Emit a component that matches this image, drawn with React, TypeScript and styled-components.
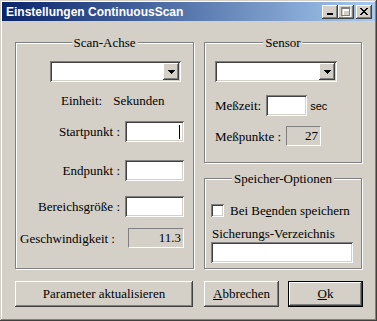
import React from 'react';
import styled, { createGlobalStyle, css } from 'styled-components';

const GlobalStyle = createGlobalStyle`
  html, body {
    margin: 0;
    padding: 0;
    background: #d4d0c8;
  }
  body {
    font-family: "Liberation Serif", "Times New Roman", serif;
    font-size: 13px;
    color: #000;
  }
`;

const raised = css`
  box-shadow: inset -1px -1px #404040, inset 1px 1px #fff, inset -2px -2px #808080,
    inset 2px 2px #d4d0c8;
`;

const sunken = css`
  box-shadow: inset 1px 1px #808080, inset -1px -1px #fff, inset 2px 2px #404040,
    inset -2px -2px #d4d0c8;
`;

const Window = styled.div`
  box-sizing: border-box;
  width: 377px;
  height: 321px;
  padding: 2px;
  background: #d4d0c8;
  box-shadow: inset -1px -1px #404040, inset 1px 1px #d4d0c8, inset -2px -2px #808080,
    inset 2px 2px #fff;
  display: flex;
  flex-direction: column;
`;

const TitleBar = styled.div`
  height: 19px;
  display: flex;
  align-items: center;
  padding: 0 3px 0 4px;
  background: linear-gradient(to right, #0a246a, #a6caf0);
`;

const Title = styled.div`
  flex: 1;
  color: #fff;
  font-family: "Liberation Sans", Arial, sans-serif;
  font-weight: bold;
  font-size: 12px;
`;

const Caps = styled.div`
  display: flex;
`;

const CapBtn = styled.div<{ $gap?: boolean }>`
  width: 16px;
  height: 14px;
  margin-left: ${(p) => (p.$gap ? '2px' : '0')};
  background: #d4d0c8;
  display: flex;
  align-items: center;
  justify-content: center;
  ${raised}
`;

const Body = styled.div`
  flex: 1;
  display: flex;
  flex-direction: column;
  padding: 21px 0 0 13px;
`;

const Panels = styled.div`
  display: flex;
  gap: 10px;
`;

const RightCol = styled.div`
  display: flex;
  flex-direction: column;
  gap: 15px;
`;

const Group = styled.div<{ $w: number; $h: number }>`
  position: relative;
  box-sizing: border-box;
  width: ${(p) => p.$w}px;
  height: ${(p) => p.$h}px;
  border: 1px solid #808080;
  box-shadow: inset 1px 1px #fff, 1px 1px #fff;
  display: flex;
  flex-direction: column;
`;

const Legend = styled.span`
  position: absolute;
  top: -8px;
  left: 50%;
  transform: translateX(-50%);
  padding: 0 2px;
  background: #d4d0c8;
  line-height: 15px;
  white-space: nowrap;
`;

const Row = styled.div<{ $top: number; $left?: number; $right?: number; $end?: boolean }>`
  display: flex;
  align-items: center;
  margin-top: ${(p) => p.$top}px;
  padding-left: ${(p) => p.$left ?? 0}px;
  padding-right: ${(p) => p.$right ?? 0}px;
  justify-content: ${(p) => (p.$end ? 'flex-end' : 'flex-start')};
  white-space: nowrap;
`;

const Label = styled.span<{ $gap?: number }>`
  margin-right: ${(p) => p.$gap ?? 0}px;
  line-height: 15px;
`;

const Field = styled.div<{ $w: number; $h?: number }>`
  position: relative;
  box-sizing: border-box;
  width: ${(p) => p.$w}px;
  height: ${(p) => p.$h ?? 21}px;
  background: #fff;
  ${sunken}
`;

const Caret = styled.span`
  position: absolute;
  right: 4px;
  top: 4px;
  width: 1px;
  height: 14px;
  background: #000;
`;

const Readout = styled.div<{ $w: number; $h?: number }>`
  box-sizing: border-box;
  width: ${(p) => p.$w}px;
  height: ${(p) => p.$h ?? 20}px;
  border: 1px solid;
  border-color: #808080 #fff #fff #808080;
  text-align: right;
  padding-right: 2px;
  line-height: 18px;
`;

const Combo = styled.div<{ $w: number }>`
  box-sizing: border-box;
  width: ${(p) => p.$w}px;
  height: 21px;
  background: #fff;
  display: flex;
  justify-content: flex-end;
  padding: 2px;
  ${sunken}
`;

const DropBtn = styled.div`
  width: 16px;
  height: 17px;
  background: #d4d0c8;
  display: flex;
  align-items: center;
  justify-content: center;
  ${raised}
`;

const Unit = styled.span`
  margin-left: 3px;
  font-family: "Liberation Sans", Arial, sans-serif;
  font-size: 11px;
`;

const Check = styled.div`
  box-sizing: border-box;
  width: 13px;
  height: 13px;
  background: #fff;
  margin-right: 6px;
  ${sunken}
`;

const ButtonRow = styled.div`
  display: flex;
  margin-top: 12px;
`;

const Button = styled.div<{ $w: number; $gap?: number; $default?: boolean }>`
  box-sizing: border-box;
  width: ${(p) => p.$w}px;
  height: 26px;
  margin-left: ${(p) => p.$gap ?? 0}px;
  display: flex;
  align-items: center;
  justify-content: center;
  background: #d4d0c8;
  ${raised}
  ${(p) =>
    p.$default &&
    css`
      border: 1px solid #000;
      box-shadow: inset -1px -1px #404040, inset 1px 1px #fff, inset -2px -2px #808080;
    `}
`;

const Arrow = () => (
  <svg width="7" height="4" viewBox="0 0 7 4">
    <path d="M0 0h7v1H0zM1 1h5v1H1zM2 2h3v1H2zM3 3h1v1H3z" fill="#000" />
  </svg>
);

const ComboBox = ({ w }: { w: number }) => (
  <Combo $w={w}>
    <DropBtn>
      <Arrow />
    </DropBtn>
  </Combo>
);

const MinIcon = () => (
  <svg width="8" height="8" viewBox="0 0 8 8">
    <rect x="1" y="5" width="6" height="2" fill="#000" />
  </svg>
);

const MaxIcon = () => (
  <svg width="10" height="10" viewBox="0 0 10 10">
    <path d="M1 1h8v8H1z M2 3h6v5H2z" fill="#fff" fillRule="evenodd" transform="translate(1 1)" />
    <path d="M0 0h9v9H0z M1 2h7v6H1z" fill="#808080" fillRule="evenodd" />
  </svg>
);

const CloseIcon = () => (
  <svg width="8" height="7" viewBox="0 0 8 7">
    <path
      d="M0 0h2v1H0zM6 0h2v1H6zM1 1h2v1H1zM5 1h2v1H5zM2 2h4v1H2zM3 3h2v1H3zM2 4h4v1H2zM1 5h2v1H1zM5 5h2v1H5zM0 6h2v1H0zM6 6h2v1H6z"
      fill="#000"
    />
  </svg>
);

const App = () => {
  return (
    <>
      <GlobalStyle />
      <Window>
        <TitleBar>
          <Title>Einstellungen ContinuousScan</Title>
          <Caps>
            <CapBtn>
              <MinIcon />
            </CapBtn>
            <CapBtn>
              <MaxIcon />
            </CapBtn>
            <CapBtn $gap>
              <CloseIcon />
            </CapBtn>
          </Caps>
        </TitleBar>
        <Body>
          <Panels>
            <Group $w={179} $h={227}>
              <Legend>Scan-Achse</Legend>
              <Row $top={18} $left={34}>
                <ComboBox w={131} />
              </Row>
              <Row $top={11} $left={45}>
                <Label $gap={11}>Einheit:</Label>
                <Label>Sekunden</Label>
              </Row>
              <Row $top={13} $right={9} $end>
                <Label $gap={5}>Startpunkt :</Label>
                <Field $w={59}>
                  <Caret />
                </Field>
              </Row>
              <Row $top={18} $right={9} $end>
                <Label $gap={5}>Endpunkt :</Label>
                <Field $w={59} />
              </Row>
              <Row $top={15} $right={9} $end>
                <Label $gap={5}>Bereichsgröße :</Label>
                <Field $w={59} />
              </Row>
              <Row $top={11} $right={9} $end>
                <Label $gap={13}>Geschwindigkeit :</Label>
                <Readout $w={56}>11.3</Readout>
              </Row>
            </Group>
            <RightCol>
              <Group $w={158} $h={121}>
                <Legend>Sensor</Legend>
                <Row $top={18} $left={10}>
                  <ComboBox w={122} />
                </Row>
                <Row $top={13} $left={10}>
                  <Label $gap={5}>Meßzeit:</Label>
                  <Field $w={41} />
                  <Unit>sec</Unit>
                </Row>
                <Row $top={10} $left={10}>
                  <Label $gap={5}>Meßpunkte :</Label>
                  <Readout $w={35}>27</Readout>
                </Row>
              </Group>
              <Group $w={158} $h={91}>
                <Legend>Speicher-Optionen</Legend>
                <Row $top={24} $left={6}>
                  <Check />
                  <Label>
                    Bei Be<u>e</u>nden speichern
                  </Label>
                </Row>
                <Row $top={8} $left={7}>
                  <Label>Sicherungs-Verzeichnis</Label>
                </Row>
                <Row $top={1} $left={6}>
                  <Field $w={142} />
                </Row>
              </Group>
            </RightCol>
          </Panels>
          <ButtonRow>
            <Button $w={178}>Parameter aktualisieren</Button>
            <Button $w={75} $gap={11}>
              <span>
                <u>A</u>bbrechen
              </span>
            </Button>
            <Button $w={75} $gap={9} $default>
              <span>
                <u>O</u>k
              </span>
            </Button>
          </ButtonRow>
        </Body>
      </Window>
    </>
  );
};

export default App;
